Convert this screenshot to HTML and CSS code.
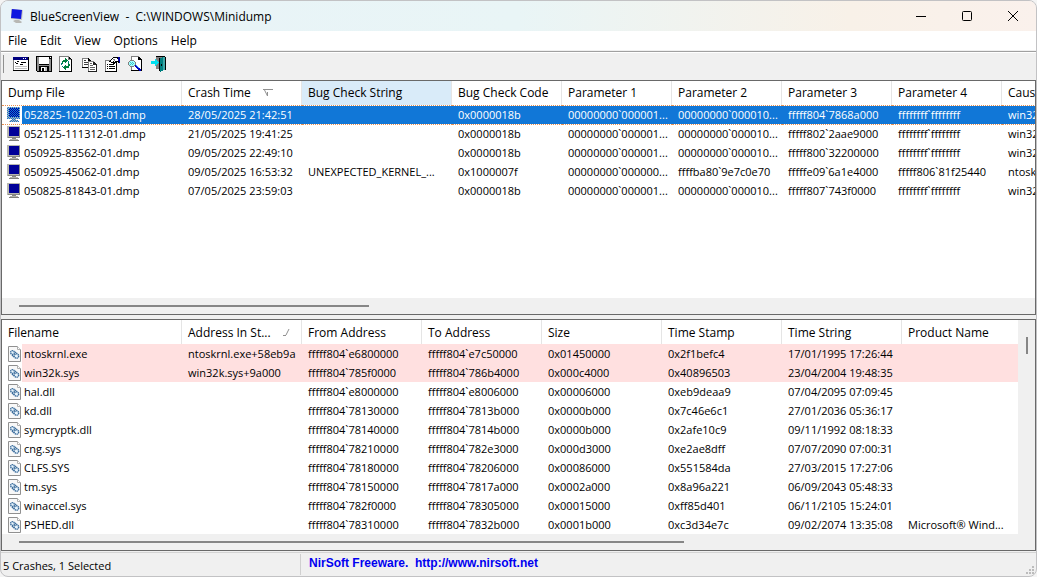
FILE: index.html
```
<!DOCTYPE html>
<html lang="en">
<head>
    <meta charset="UTF-8">
    <meta name="viewport" content="width=device-width, initial-scale=1.0">
    <title>BlueScreenView</title>
    <link rel="stylesheet" href="styles.css">
</head>
<body>
    <!-- shared icons -->
    <svg class="defs" width="0" height="0" aria-hidden="true">
        <pattern id="dither" width="2" height="2" patternUnits="userSpaceOnUse">
            <path fill="#1177d7" d="M0 0h1v1H0zM1 1h1v1H1z"/>
        </pattern>
        <symbol id="monitor" viewBox="1 0 16 16">
            <path fill="#b8b8b0" d="M1 0h13v12H1z"/>
            <path fill="#888884" d="M13 1h1v11H2v-1h11zM6 12h4v1H6z"/>
            <path fill="#000098" d="M3 1h10v9H3z"/>
            <path fill="#b4b4ac" d="M4 13h8v1H4z"/>
            <path fill="#80807c" d="M3 14h10v1H3z"/>
        </symbol>
        <symbol id="monitor-selected" viewBox="1 0 16 16">
            <path fill="#b8b8b0" d="M1 0h13v12H1zM6 12h4v1H6zM4 13h8v1H4zM3 14h10v1H3z"/>
            <path fill="#000098" d="M3 1h10v9H3z"/>
            <path fill="url(#dither)" d="M1 0h13v12h-4v1h2v1h1v1H3v-1h1v-1h2v-1H1z"/>
        </symbol>
        <symbol id="module" viewBox="0 0 16 16">
            <path fill="#f8f8f8" stroke="#909090" d="M1.500.5h9l3 3v12h-12z"/>
            <path fill="#fff" stroke="#b0b0b0" d="M10.500.5v3h3"/>
            <g fill="#e8f4fc" stroke="#3a6c9c" stroke-width="1.400" stroke-dasharray="1.300 .5">
                <circle cx="5.500" cy="6.500" r="1.900"/>
                <circle cx="9.500" cy="10" r="2.200"/>
                <path d="M5 9l2 2M8 6l2 1.500"/>
            </g>
        </symbol>
    </svg>

    <div class="window">
        <header class="titlebar">
            <svg class="app-icon" viewBox="0 0 16 16">
                <path fill="#c8c8c4" d="M2 1 14 2l-1 10-11-1z"/>
                <path fill="#1018e0" d="M3 1l10 1-1 9-10-1z"/>
                <path fill="#b8b8b4" d="M6 12h4l3 2-1 1H7l-3-2z"/>
            </svg>
            <h1 class="title">BlueScreenView&nbsp; -&nbsp; C:\WINDOWS\Minidump</h1>
            <div class="window-buttons">
                <button type="button" aria-label="Minimize"><svg viewBox="0 0 10 10"><path d="M0 5.500h10"/></svg></button>
                <button type="button" aria-label="Maximize"><svg viewBox="0 0 10 10"><rect x=".5" y=".5" width="9" height="9" rx="1"/></svg></button>
                <button type="button" aria-label="Close"><svg viewBox="0 0 10 10"><path d="M0 0l10 10M10 0L0 10"/></svg></button>
            </div>
        </header>

        <nav class="menubar">
            <button type="button">File</button>
            <button type="button">Edit</button>
            <button type="button">View</button>
            <button type="button">Options</button>
            <button type="button">Help</button>
        </nav>

        <div class="toolbar">
            <button type="button" aria-label="Advanced options">
                <svg viewBox="0 0 16 16">
                    <path fill="#808080" d="M0 1h16v14H0z"/>
                    <path d="M15 1h1v14H0v-1h15z"/>
                    <path fill="#fff" d="M1 4h14v10H1z"/>
                    <path fill="#000080" d="M0 1h15v3H0z"/>
                    <path fill="#fff" d="M10 2h1v1h-1zM12 2h1v1h-1z"/>
                    <path d="M2 6h1v1H2zM4 5h2v1H4zM3 7h2v1H3zM8 6h5v1H8zM7 8h3v1H7z"/>
                    <path fill="#c0c0c0" d="M2 10h12v1H2zM2 12h12v1H2z"/>
                </svg>
            </button>
            <button type="button" aria-label="Save">
                <svg viewBox="0 0 16 16">
                    <path d="M0 0h16v16H1l-1-1z"/>
                    <path fill="#909090" d="M1 1h2v14H1zM13 3h2v12h-2zM3 9h10v1H3z"/>
                    <path fill="#fff" d="M3 1h10v7H3zM14 1h1v1h-1zM5 11h6v4H5z"/>
                    <path d="M6 12h2v3H6z"/>
                    <path fill="#c0c0c0" d="M9 11h2v4H9z"/>
                </svg>
            </button>
            <button type="button" aria-label="Refresh">
                <svg viewBox="0 0 16 16">
                    <path d="M0 0h10v1h1v1h1v1h1v13H0z"/>
                    <path fill="#fff" d="M1 1h8v3h3v11H1z"/>
                    <path fill="#808080" d="M0 0h10v1H1v14H0zM9 1h1v2h2v1H9z"/>
                    <path fill="#008040" d="M6 2h1v1h1v1h1v1H8v1H7v1H6V6H4v2H3V5h1V4h2zM9 7h1v1h1v2h-1v2H7v2H6v-1H5v-1H4v-1h1v-1h1V9h1v1h2z"/>
                    <path fill="#008080" d="M2 7h1v2H2zM9 5h1v2H9zM3 10h1v1H3z"/>
                </svg>
            </button>
            <button type="button" aria-label="Copy">
                <svg viewBox="0 0 16 16">
                    <path d="M0 2h7v1h1v1h1v8H0z"/>
                    <path fill="#808080" d="M0 2h6v1H1v8H0z"/>
                    <path fill="#fff" d="M1 3h5v2h2v6H1z"/>
                    <path fill="#404040" d="M2 4h2v1H2zM2 6h5v1H2zM2 8h5v1H2z"/>
                    <path fill="#202020" d="M6 5h6v1h1v1h1v1h1v8H6z"/>
                    <path fill="#808080" d="M6 5h6v1H7v9H6z"/>
                    <path fill="#fff" d="M7 6h4v3h3v6H7z"/>
                    <path fill="#606060" d="M8 7h2v1H8zM8 9h3v1H8zM8 11h5v1H8zM8 13h5v1H8z"/>
                </svg>
            </button>
            <button type="button" aria-label="Properties">
                <svg viewBox="0 0 16 16">
                    <path d="M0 4h12v12H0z"/>
                    <path fill="#808080" d="M0 4h5v1H1v10H0z"/>
                    <path fill="#fff" d="M1 5h10v10H1z"/>
                    <path d="M2 8h1v1H2zM4 8h5v1H4zM2 10h1v1H2zM4 10h6v1H4zM2 12h1v1H2zM4 12h6v1H4zM5 4h1V3h1V2h1V1h5v1h2v5h-2V6h-2v1h-1v1H8V7H6V6H4V5h1z"/>
                    <path fill="#fff" d="M6 4h1V3h1V2h4v1h1v2h-3v1H9V5H8v1H6z"/>
                    <path fill="#808080" d="M8 3h2v1H8zM9 4h1v1H9z"/>
                    <path fill="#0000a0" d="M13 1h2v6h-1V5h-1z"/>
                </svg>
            </button>
            <button type="button" aria-label="Find">
                <svg viewBox="0 0 16 16">
                    <path d="M3 0h8v1h1v1h1v1h1v12H3z"/>
                    <path fill="#fff" d="M4 1h6v3h3v10H4z"/>
                    <path fill="#808080" d="M3 0h8v1H4v13H3zM2 4h4v1h1v1h1v3H7v1H6v1H2v-1H1V9H0V6h1V5h1z"/>
                    <path fill="#a0ffff" d="M2 5h4v1h1v3H6v1H2V9H1V6h1z"/>
                    <path fill="#40c0c8" d="M2 6h1v1H2zM4 6h1v1H4zM3 7h1v1H3zM5 7h1v1H5zM2 8h1v1H2zM4 8h1v1H4z"/>
                    <path fill="#0000c0" d="M7 9h2v1h1v1h1v1h1v1h1v2h-2v-1h-1v-1H9v-1H8v-1H7z"/>
                    <path fill="#40a0ff" d="M8 9h1v1h1v1h1v1h-1v-1H9v-1H8z"/>
                </svg>
            </button>
            <button type="button" aria-label="Exit">
                <svg viewBox="0 0 16 16">
                    <path fill="#808080" d="M5 1h9v12H5z"/>
                    <path d="M5 0h9v1H5zM14 1h1v13h-1zM8 2h1v13H8z"/>
                    <path fill="#008080" d="M9 2l4-1v13l-4 2z"/>
                    <path fill="#40a8a8" d="M12 1h2v13h-2z"/>
                    <path d="M10 8h1v2h-1z"/>
                    <path fill="#00e0f0" d="M0 5h4V3h1v1h1v1h1v1h1v1H7v1H6v1H5v1H4V8H0z"/>
                </svg>
            </button>
        </div>

        <main class="panes">
            <section class="pane pane-dumps">
                <div class="view">
                    <table class="list list-dumps">
                        <colgroup>
                            <col class="col-name"><col class="col-time"><col class="col-string">
                            <col class="col-param"><col class="col-param"><col class="col-param"><col class="col-param"><col class="col-param">
                            <col>
                        </colgroup>
                        <thead>
                            <tr>
                                <th>Dump File</th>
                                <th><span class="sorted">Crash Time <svg class="sort-desc" viewBox="0 0 10 8"><path d="M0 .5h10M1.500 1l3 6V3"/></svg></span></th>
                                <th class="hot">Bug Check String</th>
                                <th>Bug Check Code</th>
                                <th>Parameter 1</th>
                                <th>Parameter 2</th>
                                <th>Parameter 3</th>
                                <th>Parameter 4</th>
                                <th>Caused By Driver</th>
                            </tr>
                        </thead>
                        <tbody>
                            <tr class="selected"><td><span class="file"><svg><use href="#monitor-selected"/></svg>052825-102203-01.dmp</span></td><td>28/05/2025 21:42:51</td><td></td><td>0x0000018b</td><td>00000000`000001...</td><td>00000000`000010...</td><td>fffff804`7868a000</td><td>ffffffff`ffffffff</td><td>win32k.sys</td></tr>
                            <tr><td><span class="file"><svg><use href="#monitor"/></svg>052125-111312-01.dmp</span></td><td>21/05/2025 19:41:25</td><td></td><td>0x0000018b</td><td>00000000`000001...</td><td>00000000`000010...</td><td>fffff802`2aae9000</td><td>ffffffff`ffffffff</td><td>win32k.sys</td></tr>
                            <tr><td><span class="file"><svg><use href="#monitor"/></svg>050925-83562-01.dmp</span></td><td>09/05/2025 22:49:10</td><td></td><td>0x0000018b</td><td>00000000`000001...</td><td>00000000`000010...</td><td>fffff800`32200000</td><td>ffffffff`ffffffff</td><td>win32k.sys</td></tr>
                            <tr><td><span class="file"><svg><use href="#monitor"/></svg>050925-45062-01.dmp</span></td><td>09/05/2025 16:53:32</td><td>UNEXPECTED_KERNEL_...</td><td>0x1000007f</td><td>00000000`000000...</td><td>ffffba80`9e7c0e70</td><td>fffffe09`6a1e4000</td><td>fffff806`81f25440</td><td>ntoskrnl.exe</td></tr>
                            <tr><td><span class="file"><svg><use href="#monitor"/></svg>050825-81843-01.dmp</span></td><td>07/05/2025 23:59:03</td><td></td><td>0x0000018b</td><td>00000000`000001...</td><td>00000000`000010...</td><td>fffff807`743f0000</td><td>ffffffff`ffffffff</td><td>win32k.sys</td></tr>
                        </tbody>
                    </table>
                </div>
                <div class="hscroll"><div class="thumb thumb-dumps"></div></div>
            </section>

            <section class="pane pane-drivers">
                <div class="view-row">
                    <div class="view">
                        <table class="list list-drivers">
                            <colgroup>
                                <col class="col-name"><col class="col-time"><col class="col-time"><col class="col-time">
                                <col class="col-time"><col class="col-time"><col class="col-time"><col>
                            </colgroup>
                            <thead>
                                <tr>
                                    <th>Filename</th>
                                    <th><span class="sorted">Address In St... <svg class="sort-asc" viewBox="0 0 7 7"><path d="M0 6.500h3M3 6l3-6"/></svg></span></th>
                                    <th>From Address</th>
                                    <th>To Address</th>
                                    <th>Size</th>
                                    <th>Time Stamp</th>
                                    <th>Time String</th>
                                    <th>Product Name</th>
                                </tr>
                            </thead>
                            <tbody>
                                <tr class="crashed"><td><span class="file"><svg><use href="#module"/></svg>ntoskrnl.exe</span></td><td>ntoskrnl.exe+58eb9a</td><td>fffff804`e6800000</td><td>fffff804`e7c50000</td><td>0x01450000</td><td>0x2f1befc4</td><td>17/01/1995 17:26:44</td><td></td></tr>
                                <tr class="crashed"><td><span class="file"><svg><use href="#module"/></svg>win32k.sys</span></td><td>win32k.sys+9a000</td><td>fffff804`785f0000</td><td>fffff804`786b4000</td><td>0x000c4000</td><td>0x40896503</td><td>23/04/2004 19:48:35</td><td></td></tr>
                                <tr><td><span class="file"><svg><use href="#module"/></svg>hal.dll</span></td><td></td><td>fffff804`e8000000</td><td>fffff804`e8006000</td><td>0x00006000</td><td>0xeb9deaa9</td><td>07/04/2095 07:09:45</td><td></td></tr>
                                <tr><td><span class="file"><svg><use href="#module"/></svg>kd.dll</span></td><td></td><td>fffff804`78130000</td><td>fffff804`7813b000</td><td>0x0000b000</td><td>0x7c46e6c1</td><td>27/01/2036 05:36:17</td><td></td></tr>
                                <tr><td><span class="file"><svg><use href="#module"/></svg>symcryptk.dll</span></td><td></td><td>fffff804`78140000</td><td>fffff804`7814b000</td><td>0x0000b000</td><td>0x2afe10c9</td><td>09/11/1992 08:18:33</td><td></td></tr>
                                <tr><td><span class="file"><svg><use href="#module"/></svg>cng.sys</span></td><td></td><td>fffff804`78210000</td><td>fffff804`782e3000</td><td>0x000d3000</td><td>0xe2ae8dff</td><td>07/07/2090 07:00:31</td><td></td></tr>
                                <tr><td><span class="file"><svg><use href="#module"/></svg>CLFS.SYS</span></td><td></td><td>fffff804`78180000</td><td>fffff804`78206000</td><td>0x00086000</td><td>0x551584da</td><td>27/03/2015 17:27:06</td><td></td></tr>
                                <tr><td><span class="file"><svg><use href="#module"/></svg>tm.sys</span></td><td></td><td>fffff804`78150000</td><td>fffff804`7817a000</td><td>0x0002a000</td><td>0x8a96a221</td><td>06/09/2043 05:48:33</td><td></td></tr>
                                <tr><td><span class="file"><svg><use href="#module"/></svg>winaccel.sys</span></td><td></td><td>fffff804`782f0000</td><td>fffff804`78305000</td><td>0x00015000</td><td>0xff85d401</td><td>06/11/2105 15:24:01</td><td></td></tr>
                                <tr><td><span class="file"><svg><use href="#module"/></svg>PSHED.dll</span></td><td></td><td>fffff804`78310000</td><td>fffff804`7832b000</td><td>0x0001b000</td><td>0xc3d34e7c</td><td>09/02/2074 13:35:08</td><td>Microsoft® Wind...</td></tr>
                            </tbody>
                        </table>
                    </div>
                    <div class="vscroll"><div class="thumb-v"></div></div>
                </div>
                <div class="hscroll"><div class="thumb thumb-drivers"></div></div>
            </section>
        </main>

        <footer class="statusbar">
            <span class="status-count">5 Crashes, 1 Selected</span>
            <a class="status-link" href="http://www.nirsoft.net">NirSoft Freeware.&nbsp; http://www.nirsoft.net</a>
            <svg class="grip" viewBox="0 0 8 8"><path d="M6 0h2v2H6zM3 3h2v2H3zM6 3h2v2H6zM0 6h2v2H0zM3 6h2v2H3zM6 6h2v2H6z"/></svg>
        </footer>
    </div>
</body>
</html>
```
FILE: styles.css
```
* {
    box-sizing: border-box;
}
body {
    margin: 0;
    background: #f4f4f4;
    font-family: "Open Sans", "Noto Sans", sans-serif;
    font-size: 12px;
    color: #000;
}
button {
    padding: 0;
    border: none;
    background: none;
    font: inherit;
    color: inherit;
}
svg {
    display: block;
    flex: none;
}
.defs {
    position: absolute;
}
.window {
    display: flex;
    flex-direction: column;
    height: 100vh;
    overflow: hidden;
    background: #f0f0f0;
    border: 1px solid #c2c2c4;
    border-radius: 8px;
}

/* title bar */
.titlebar {
    display: flex;
    align-items: center;
    height: 30px;
    padding-left: 8px;
    background: linear-gradient(90deg, #e8f3f8 0%, #e9f5f6 50%, #f8f1e8 82%, #faf1ec 100%);
}
.app-icon {
    width: 16px;
    height: 16px;
}
.title {
    flex: 1;
    margin: 0 0 0 5px;
    font-size: 12px;
    font-weight: 400;
}
.window-buttons {
    display: flex;
}
.window-buttons button {
    display: flex;
    align-items: center;
    justify-content: center;
    width: 46px;
    height: 30px;
}
.window-buttons svg {
    width: 10px;
    height: 10px;
    fill: none;
    stroke: #000;
    overflow: visible;
}

/* menu and toolbar */
.menubar {
    display: flex;
    gap: 13px;
    height: 20px;
    padding-left: 7px;
    background: #fff;
    border-bottom: 1px solid #f0f0f0;
}
.toolbar {
    display: flex;
    align-items: center;
    gap: 7px;
    height: 29px;
    padding: 0 8px 4px 2px;
    border-top: 1px solid #a0a0a0;
    box-shadow: inset 0 1px #fff;
}
.toolbar::before {
    content: "";
    width: 2px;
    height: 18px;
    border-left: 1px solid #909090;
}
.toolbar button {
    width: 16px;
    height: 16px;
}
.toolbar svg {
    width: 16px;
    height: 16px;
    shape-rendering: crispEdges;
}

/* list panes */
.panes {
    display: flex;
    flex-direction: column;
    flex: 1;
    gap: 4px;
    min-height: 0;
}
.pane {
    display: flex;
    flex-direction: column;
    min-width: 0;
    border: 1px solid #696969;
}
.pane-dumps {
    flex: 1;
}
.view {
    flex: 1;
    min-width: 0;
    overflow: hidden;
    background: #fff;
}
.view-row {
    display: flex;
}
.list {
    table-layout: fixed;
    border-collapse: collapse;
    width: 100%;
    font-size: 11px;
}
.list-dumps {
    min-width: 1120px;
}
.col-name {
    width: 180px;
}
.col-time {
    width: 120px;
}
.col-string {
    width: 150px;
}
.col-param {
    width: 110px;
}
.list th,
.list td {
    padding: 0 0 0 6px;
    overflow: hidden;
    white-space: nowrap;
    text-align: left;
    font-weight: 400;
}
.list th {
    height: 24px;
    font-size: 12px;
    box-shadow: inset -1px 0 #e5e5e5;
}
.list th:last-child {
    box-shadow: none;
}
.list .hot {
    background: #d9ebf9;
}
.list td {
    height: 19px;
    line-height: 18px;
}
.list td:first-child {
    padding-left: 5px;
}
.sorted {
    display: flex;
    align-items: center;
    gap: 12px;
}
.sorted svg {
    fill: none;
    stroke: #909090;
}
.sort-desc {
    width: 10px;
    height: 8px;
}
.sort-asc {
    width: 7px;
    height: 7px;
}
.file {
    display: flex;
    align-items: center;
    gap: 1px;
}
.file svg {
    width: 16px;
    height: 16px;
}
.list-dumps .file svg {
    shape-rendering: crispEdges;
}
.selected td {
    background: #1177d7;
    color: #fff;
    border-top: 1px dotted #e89050;
    border-bottom: 1px dotted #e89050;
}
.selected td:first-child {
    background: linear-gradient(90deg, #fff 20px, #1177d7 20px);
}
.crashed td {
    background: #ffe0e0;
}
.crashed td:first-child {
    background: linear-gradient(90deg, #fff 20px, #ffe0e0 20px);
}

/* scroll bars */
.hscroll {
    display: flex;
    align-items: center;
    height: 16px;
    padding: 0 17px;
}
.thumb {
    height: 2px;
    background: #868686;
}
.thumb-dumps {
    width: 35%;
}
.thumb-drivers {
    width: 66.6%;
}
.vscroll {
    width: 17px;
    padding: 17px 8px;
}
.thumb-v {
    width: 2px;
    height: 17px;
    background: #868686;
}

/* status bar */
.statusbar {
    display: flex;
    height: 24px;
    margin-top: 1px;
    border-top: 1px solid #d4d4d4;
}
.status-count {
    width: 300px;
    margin: 1px 0;
    padding-left: 2px;
    font-size: 11px;
    line-height: 24px;
    border-right: 1px solid #d0d0d0;
}
.status-link {
    flex: 1;
    padding-left: 8px;
    font: bold 12px/20px "Liberation Sans", Arial, sans-serif;
    color: #0000f0;
    text-decoration: none;
}
.grip {
    align-self: flex-end;
    width: 8px;
    height: 8px;
    margin: 0 2px 2px 0;
    fill: #bcbcbc;
}
```
